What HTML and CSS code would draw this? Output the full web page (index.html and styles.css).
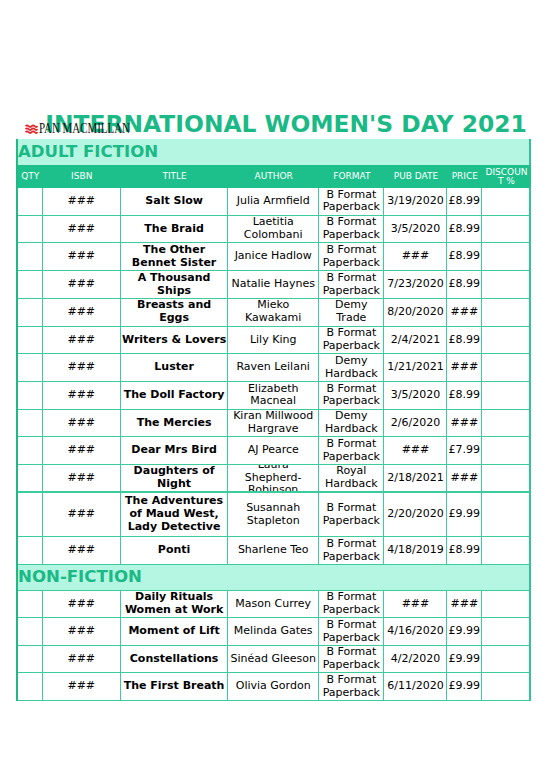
FILE: index.html
```html
<!DOCTYPE html>
<html>
<head>
<meta charset="utf-8">
<link rel="stylesheet" href="styles.css">
</head>
<body>
<div class="sheet">
  <div class="title-row">
    <div class="logo">
      <svg class="logo-mark" width="13" height="10" viewBox="0 0 13 10">
        <path d="M0.5 2.2 Q2 0.6 3.6 2.2 T6.7 2.2 T9.8 2.2 T12.6 2.2" fill="none" stroke="#e2262d" stroke-width="1.8"/>
        <path d="M0.5 5.2 Q2 3.6 3.6 5.2 T6.7 5.2 T9.8 5.2 T12.6 5.2" fill="none" stroke="#e2262d" stroke-width="1.8"/>
        <path d="M0.5 8.2 Q2 6.6 3.6 8.2 T6.7 8.2 T9.8 8.2 T12.6 8.2" fill="none" stroke="#e2262d" stroke-width="1.8"/>
      </svg>
      <span class="logo-text">PAN MACMILLAN</span>
    </div>
    <div class="title-spacer"></div>
    <h1 class="title">INTERNATIONAL WOMEN'S DAY 2021</h1>
  </div>

  <div class="grid">
    <div class="band"><span>ADULT FICTION</span></div>

    <div class="hd">QTY</div><div class="hd">ISBN</div><div class="hd">TITLE</div><div class="hd">AUTHOR</div><div class="hd">FORMAT</div><div class="hd">PUB DATE</div><div class="hd">PRICE</div><div class="hd">DISCOUN<br>T %</div>

    <div class="c"></div><div class="c">###</div><div class="c b">Salt Slow</div><div class="c">Julia Armfield</div><div class="c">B Format Paperback</div><div class="c">3/19/2020</div><div class="c">£8.99</div><div class="c last"></div>
    <div class="c"></div><div class="c">###</div><div class="c b">The Braid</div><div class="c">Laetitia Colombani</div><div class="c">B Format Paperback</div><div class="c">3/5/2020</div><div class="c">£8.99</div><div class="c last"></div>
    <div class="c"></div><div class="c">###</div><div class="c b">The Other Bennet Sister</div><div class="c">Janice Hadlow</div><div class="c">B Format Paperback</div><div class="c">###</div><div class="c">£8.99</div><div class="c last"></div>
    <div class="c"></div><div class="c">###</div><div class="c b">A Thousand Ships</div><div class="c">Natalie Haynes</div><div class="c">B Format Paperback</div><div class="c">7/23/2020</div><div class="c">£8.99</div><div class="c last"></div>
    <div class="c"></div><div class="c">###</div><div class="c b">Breasts and Eggs</div><div class="c">Mieko Kawakami</div><div class="c">Demy Trade</div><div class="c">8/20/2020</div><div class="c">###</div><div class="c last"></div>
    <div class="c"></div><div class="c">###</div><div class="c b">Writers &amp; Lovers</div><div class="c">Lily King</div><div class="c">B Format Paperback</div><div class="c">2/4/2021</div><div class="c">£8.99</div><div class="c last"></div>
    <div class="c"></div><div class="c">###</div><div class="c b">Luster</div><div class="c">Raven Leilani</div><div class="c">Demy Hardback</div><div class="c">1/21/2021</div><div class="c">###</div><div class="c last"></div>
    <div class="c"></div><div class="c">###</div><div class="c b">The Doll Factory</div><div class="c">Elizabeth Macneal</div><div class="c">B Format Paperback</div><div class="c">3/5/2020</div><div class="c">£8.99</div><div class="c last"></div>
    <div class="c"></div><div class="c">###</div><div class="c b">The Mercies</div><div class="c">Kiran Millwood Hargrave</div><div class="c">Demy Hardback</div><div class="c">2/6/2020</div><div class="c">###</div><div class="c last"></div>
    <div class="c"></div><div class="c">###</div><div class="c b">Dear Mrs Bird</div><div class="c">AJ Pearce</div><div class="c">B Format Paperback</div><div class="c">###</div><div class="c">£7.99</div><div class="c last"></div>
    <div class="c thick"></div><div class="c thick">###</div><div class="c b thick">Daughters of Night</div><div class="c thick">Laura Shepherd-Robinson</div><div class="c thick">Royal Hardback</div><div class="c thick">2/18/2021</div><div class="c thick">###</div><div class="c last thick"></div>
    <div class="c tall"></div><div class="c tall">###</div><div class="c b tall">The Adventures of Maud West, Lady Detective</div><div class="c tall">Susannah Stapleton</div><div class="c tall">B Format Paperback</div><div class="c tall">2/20/2020</div><div class="c tall">£9.99</div><div class="c last tall"></div>
    <div class="c"></div><div class="c">###</div><div class="c b">Ponti</div><div class="c">Sharlene Teo</div><div class="c">B Format Paperback</div><div class="c">4/18/2019</div><div class="c">£8.99</div><div class="c last"></div>

    <div class="band band2"><span>NON-FICTION</span></div>

    <div class="c r2"></div><div class="c r2">###</div><div class="c b r2">Daily Rituals Women at Work</div><div class="c r2">Mason Currey</div><div class="c r2">B Format Paperback</div><div class="c r2">###</div><div class="c r2">###</div><div class="c last r2"></div>
    <div class="c r2"></div><div class="c r2">###</div><div class="c b r2">Moment of Lift</div><div class="c r2">Melinda Gates</div><div class="c r2">B Format Paperback</div><div class="c r2">4/16/2020</div><div class="c r2">£9.99</div><div class="c last r2"></div>
    <div class="c r2"></div><div class="c r2">###</div><div class="c b r2">Constellations</div><div class="c r2">Sinéad Gleeson</div><div class="c r2">B Format Paperback</div><div class="c r2">4/2/2020</div><div class="c r2">£9.99</div><div class="c last r2"></div>
    <div class="c r2"></div><div class="c r2">###</div><div class="c b r2">The First Breath</div><div class="c r2">Olivia Gordon</div><div class="c r2">B Format Paperback</div><div class="c r2">6/11/2020</div><div class="c r2">£9.99</div><div class="c last r2"></div>
  </div>
</div>
</body>
</html>
```

FILE: styles.css
```css
html, body {
  margin: 0;
  padding: 0;
  background: #ffffff;
}
body {
  font-family: "DejaVu Sans", sans-serif;
  color: #000000;
}
.sheet {
  padding-top: 110px;
  padding-left: 16px;
}
.title-row {
  position: relative;
  display: grid;
  grid-template-columns: 26px 488px;
  height: 29px;
}
.title {
  grid-column: 2;
  margin: 0;
  font-size: 23.4px;
  line-height: 29px;
  font-weight: bold;
  color: #1ab985;
  text-align: center;
  white-space: nowrap;
}
.logo {
  position: absolute;
  left: 9px;
  top: 13px;
  display: flex;
  align-items: center;
  gap: 1px;
  z-index: 1;
}
.logo-mark {
  display: block;
}
.logo-text {
  font-family: "Liberation Serif", serif;
  font-size: 14px;
  line-height: 12px;
  color: #111111;
  display: inline-block;
  transform: scaleX(0.78);
  transform-origin: left center;
  white-space: nowrap;
}
.grid {
  display: grid;
  grid-template-columns: 24.5px 78.5px 107.2px 91px 65.3px 63px 34.7px 48.6px;
  border-left: 2px solid #22b885;
  width: 512.8px;
}
.band {
  grid-column: 1 / -1;
  height: 26px;
  background: #b4f6e2;
  border-right: 2px solid #2fc596;
  display: flex;
  align-items: center;
  box-sizing: border-box;
}
.band span {
  font-size: 16.6px;
  font-weight: bold;
  color: #1ab985;
  line-height: 20px;
}
.band2 {
  height: 25.7px;
  border-bottom: 1px solid #3ccb9b;
}
.hd {
  height: 23px;
  background: #1dc08b;
  color: #ffffff;
  font-size: 9px;
  line-height: 9px;
  display: flex;
  align-items: center;
  justify-content: center;
  text-align: center;
}
.c {
  box-sizing: border-box;
  height: 27.73px;
  border-right: 1px solid #3ccb9b;
  border-bottom: 1px solid #3ccb9b;
  font-size: 11px;
  line-height: 12.8px;
  display: flex;
  align-items: center;
  justify-content: center;
  text-align: center;
  overflow: hidden;
}
.c.last {
  border-right: 2px solid #2fc596;
}
.b {
  font-weight: bold;
}
.thick {
  border-bottom: 2px solid #3ccb9b;
}
.tall {
  height: 44.3px;
}
.r2 {
  height: 27.6px;
}
```
